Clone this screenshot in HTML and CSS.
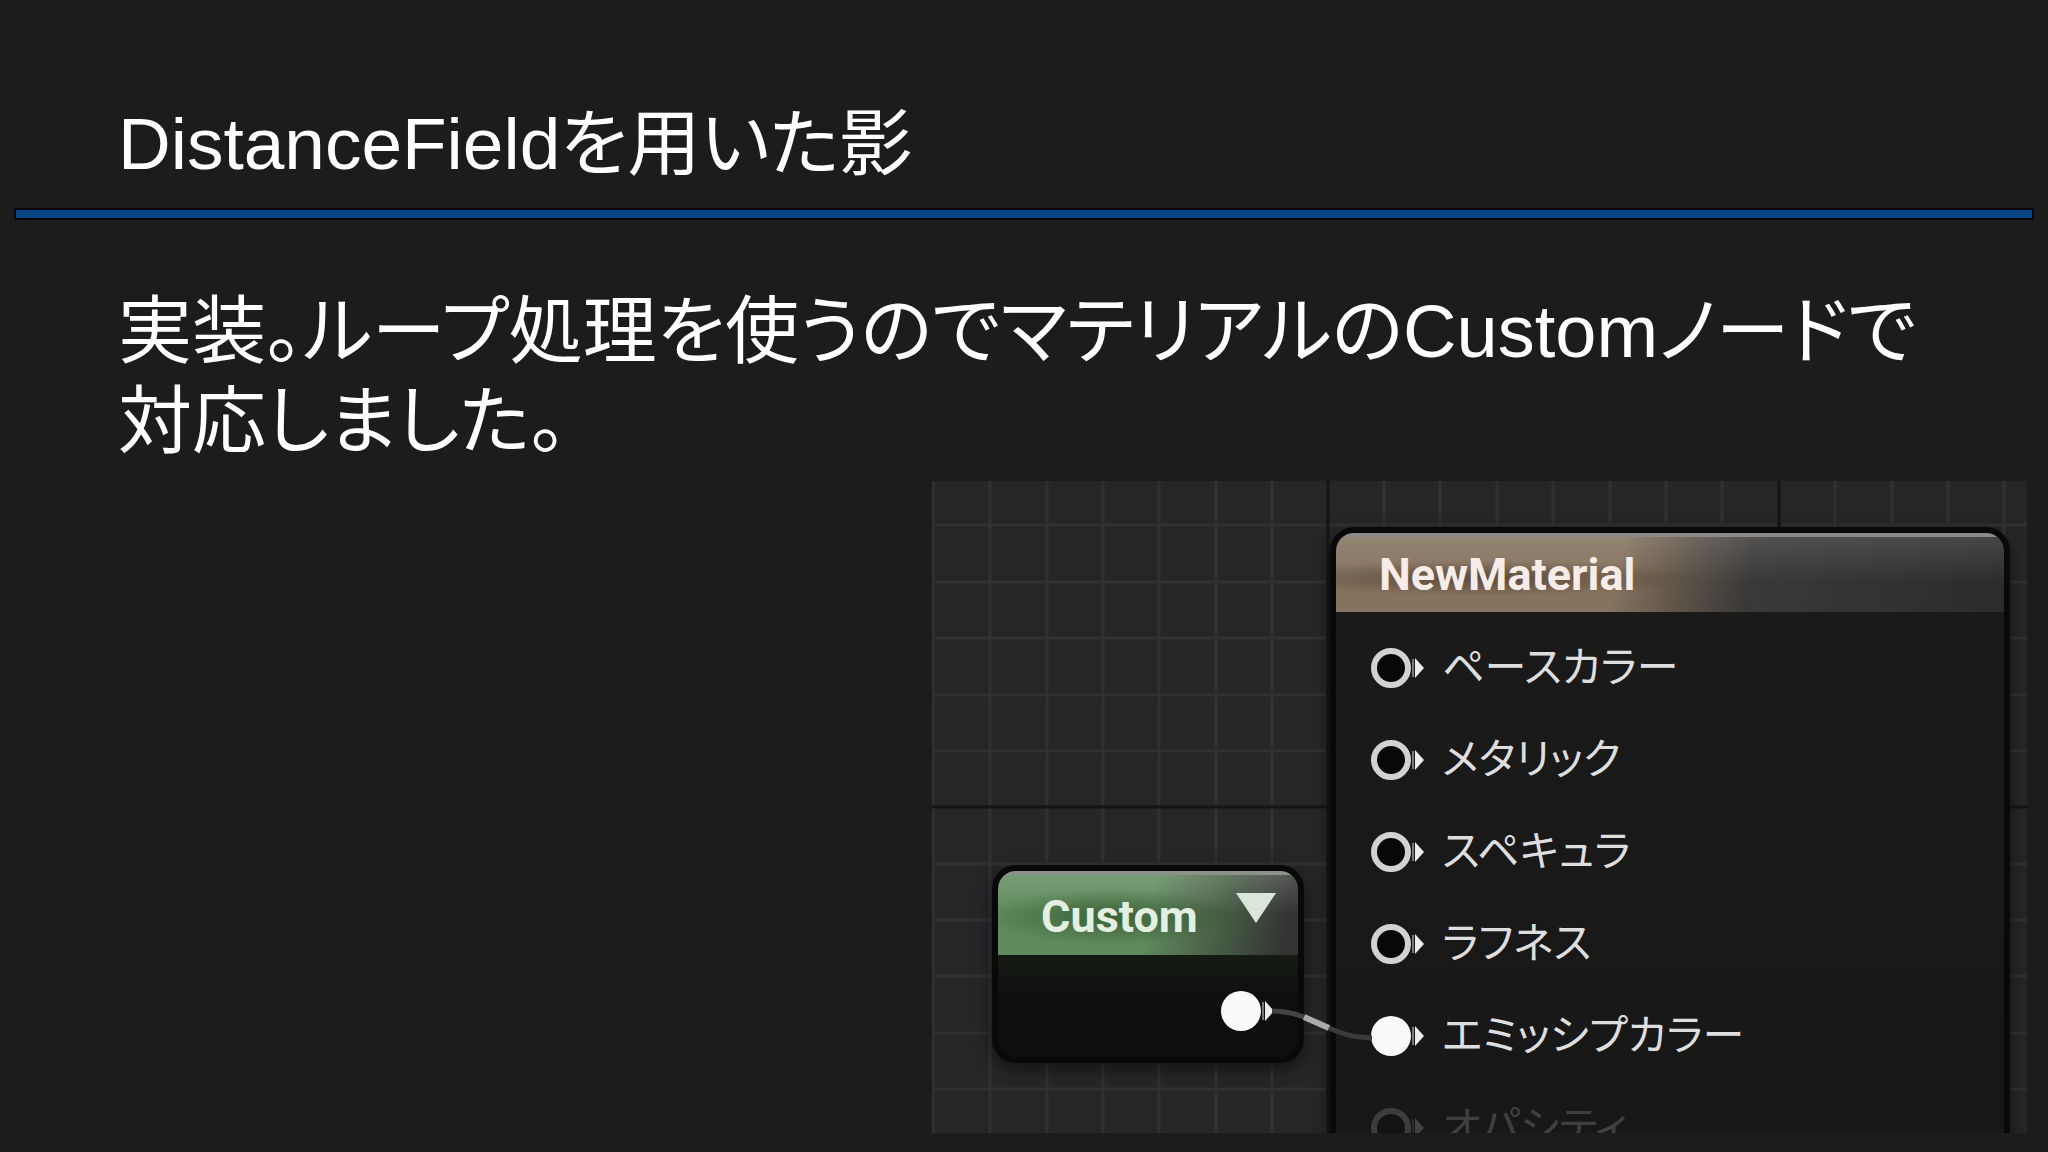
FILE: index.html
```html
<!DOCTYPE html>
<html lang="ja">
<head>
    <meta charset="UTF-8">
    <meta name="viewport" content="width=device-width, initial-scale=1.0">
    <title>DistanceFieldを用いた影</title>
    <link rel="stylesheet" href="styles.css">
</head>
<body>
    <svg class="defs" aria-hidden="true">
        <symbol id="pin-open" viewBox="0 0 56 42">
            <circle cx="21" cy="21" r="17" fill="#080808" stroke="#d2d2d2" stroke-width="6"/>
            <path d="M43 12V30" stroke="#777" stroke-width="2"/>
            <path d="M45 11L54 21L45 31Z" fill="#eee"/>
        </symbol>
        <symbol id="pin-linked" viewBox="0 0 56 42">
            <circle cx="21" cy="21" r="20" fill="#fafafa"/>
            <path d="M43 12V30" stroke="#777" stroke-width="2"/>
            <path d="M45 11L54 21L45 31Z" fill="#eee"/>
        </symbol>
    </svg>
    <header>
        <h1>DistanceFieldを用いた影</h1>
    </header>
    <hr class="rule">
    <main>
        <p class="lead">実装。ループ処理を使うのでマテリアルのCustomノードで<br>対応しました。</p>
        <section class="graph">
            <svg class="grid" aria-hidden="true">
                <path class="minor" d="M1 0V700M58 0V700M115 0V700M171 0V700M227 0V700M284 0V700M340 0V700M452 0V700M508 0V700M565 0V700M621 0V700M678 0V700M734 0V700M790 0V700M903 0V700M960 0V700M1016 0V700M1072 0V700"/>
                <path class="minor" d="M0 44H1200M0 101H1200M0 157H1200M0 214H1200M0 270H1200M0 383H1200M0 439H1200M0 495H1200M0 552H1200M0 608H1200"/>
                <path class="major" d="M396 0V700M847 0V700M0 326H1200"/>
            </svg>
            <article class="node custom">
                <h2>Custom <svg class="arrow" viewBox="0 0 40 30"><path d="M0 0H40L20 30Z" fill="#dbe6da"/></svg></h2>
                <div class="output"><svg class="pin"><use href="#pin-linked"/></svg></div>
            </article>
            <article class="node material">
                <h2>NewMaterial</h2>
                <ul>
                    <li><svg class="pin"><use href="#pin-open"/></svg>ペースカラー</li>
                    <li><svg class="pin"><use href="#pin-open"/></svg>メタリック</li>
                    <li><svg class="pin"><use href="#pin-open"/></svg>スペキュラ</li>
                    <li><svg class="pin"><use href="#pin-open"/></svg>ラフネス</li>
                    <li><svg class="pin"><use href="#pin-linked"/></svg>エミッシプカラー</li>
                    <li class="off"><svg class="pin"><use href="#pin-open"/></svg>オパシティ</li>
                </ul>
            </article>
            <svg class="wire" viewBox="0 0 100 40" aria-hidden="true">
                <path d="M0 7C14 7 24 10 32 13" stroke="#444"/>
                <path d="M32 13L57 24" stroke="#aaa" stroke-width="6"/>
                <path d="M57 24C70 30 80 33 100 34" stroke="#3a3a3a"/>
            </svg>
        </section>
    </main>
</body>
</html>
```
FILE: styles.css
```css
* {
    box-sizing: border-box;
}
body {
    display: flex;
    flex-direction: column;
    min-height: 100vh;
    margin: 0;
    background-color: #1c1c1d;
    color: #fff;
    font-family: "Liberation Sans", "Noto Sans CJK JP", sans-serif;
    font-feature-settings: "palt";
}
.defs {
    position: absolute;
    width: 0;
    height: 0;
}
header {
    padding: 99px 118px 19px;
}
h1 {
    margin: 0;
    font-size: 73px;
    font-weight: normal;
    line-height: 90px;
}
.rule {
    width: auto;
    height: 12px;
    margin: 0 14px;
    border: 2px solid #05070c;
    border-radius: 2px;
    background-color: #044482;
}
main {
    display: flex;
    flex: 1;
    flex-direction: column;
    padding: 67px 21px 19px;
}
.lead {
    margin: 0;
    padding: 0 97px;
    font-size: 74px;
    line-height: 90px;
}
.graph {
    position: relative;
    flex: 1;
    align-self: flex-end;
    width: 1095px;
    max-width: 100%;
    margin-top: 14px;
    overflow: hidden;
    background-color: #262628;
    font-family: Roboto, "Noto Sans CJK JP", sans-serif;
}
.grid {
    position: absolute;
    width: 100%;
    height: 100%;
}
.grid path {
    fill: none;
    stroke-width: 3;
}
.minor {
    stroke: #313133;
}
.major {
    stroke: #151516;
}
.node {
    position: absolute;
    border: 6px solid #090909;
    border-radius: 24px;
    box-shadow: 0 6px 16px rgba(0, 0, 0, 0.5);
    overflow: hidden;
}
.node h2 {
    display: flex;
    justify-content: space-between;
    margin: 0;
    font-size: 45px;
    font-weight: bold;
}
.custom {
    top: 384px;
    left: 60px;
    width: 312px;
    height: 198px;
    background: linear-gradient(#10170f 78px, #151b13 84px, #0f0f0f 124px);
}
.custom h2 {
    height: 84px;
    padding: 0 22px 0 43px;
    border-top: 4px solid #8b928a;
    background:
        radial-gradient(ellipse at 38% 52%, rgba(35, 70, 30, 0.6), transparent 48%),
        linear-gradient(rgba(255, 255, 255, 0.16), transparent 50%),
        linear-gradient(100deg, #5f8a5c 50%, #4a6047 72%, #333433 95%);
    color: #e3efe0;
    line-height: 84px;
}
.arrow {
    width: 40px;
    height: 30px;
    margin-top: 18px;
}
.output {
    display: flex;
    justify-content: flex-end;
    padding: 35px 22px 0 0;
}
.pin {
    flex: none;
    width: 56px;
    height: 42px;
}
.material {
    top: 46px;
    right: 17px;
    bottom: -40px;
    left: 398px;
    background: linear-gradient(#1c1a18 80px, #1a1a1a 130px, #171717);
}
.material h2 {
    height: 79px;
    padding: 0 43px;
    border-top: 4px solid #8f8a85;
    background:
        radial-gradient(ellipse at 22% 55%, rgba(65, 48, 34, 0.6), transparent 30%),
        linear-gradient(rgba(255, 255, 255, 0.12), transparent 60%),
        linear-gradient(100deg, #85735f 42%, #5d5348 52%, #3a3938 62%, #2d2c2c);
    color: #f7ece6;
    line-height: 76px;
}
.material ul {
    margin: 0;
    padding: 10px 34px;
    list-style: none;
}
.material li {
    display: flex;
    align-items: center;
    gap: 16px;
    height: 92px;
    color: #dedede;
    font-size: 42px;
    line-height: 42px;
}
.material .off {
    opacity: 0.2;
}
.wire {
    position: absolute;
    top: 523px;
    left: 340px;
    width: 100px;
    height: 40px;
    fill: none;
    stroke-width: 5px;
}
```
